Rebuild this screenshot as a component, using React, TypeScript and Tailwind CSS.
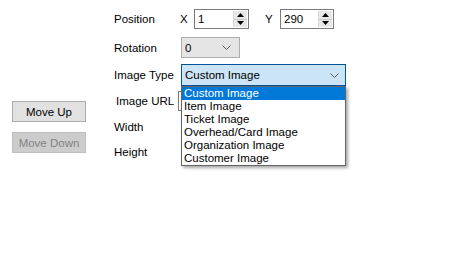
import React from "react";

const font = { fontFamily: '"Liberation Sans", Arial, sans-serif' };

function Spinner() {
  return (
    <div className="flex h-full w-[14px] flex-col border-l border-[#d9d9d9] bg-[#e8e8e8]">
      <div className="flex flex-1 items-center justify-center border-b border-[#c8c8c8]">
        <svg width="7" height="4" viewBox="0 0 7 4"><path d="M0 4 L3.5 0 L7 4 Z" fill="#000" /></svg>
      </div>
      <div className="flex flex-1 items-center justify-center">
        <svg width="7" height="4" viewBox="0 0 7 4"><path d="M0 0 L3.5 4 L7 0 Z" fill="#000" /></svg>
      </div>
    </div>
  );
}

function NumBox({ value, width }: { value: string; width: string }) {
  return (
    <div className={`flex h-[20px] ${width} items-stretch border border-[#7a7a7a] bg-white p-px`}>
      <div className="flex flex-1 items-center pl-[2px] pt-[2px] leading-none text-black">{value}</div>
      <Spinner />
    </div>
  );
}

function Chevron() {
  return (
    <svg width="9" height="5" viewBox="0 0 9 5">
      <path d="M0.5 0.5 L4.5 4.5 L8.5 0.5" fill="none" stroke="#5a5a5a" strokeWidth="1" />
    </svg>
  );
}

const items = [
  "Custom Image",
  "Item Image",
  "Ticket Image",
  "Overhead/Card Image",
  "Organization Image",
  "Customer Image",
];

export default function App() {
  return (
    <div className="relative h-[274px] w-[449px] overflow-hidden bg-white text-[11.5px] text-black" style={font}>
      <div className="flex">
        {/* Left buttons */}
        <div className="flex w-[114px] flex-col pl-[12px] pt-[101px]">
          <div className="flex h-[21px] w-[74px] items-center justify-center border border-[#adadad] bg-[#e1e1e1] pt-[2px] leading-none">
            Move Up
          </div>
          <div className="mt-[10px] flex h-[21px] w-[74px] items-center justify-center border border-[#bfbfbf] bg-[#cccccc] pt-[2px] leading-none text-[#838383]">
            Move Down
          </div>
        </div>

        {/* Form */}
        <div className="flex flex-col pt-[9px]">
          <div className="flex h-[20px] items-center">
            <div className="w-[66px] pt-[2px]">Position</div>
            <div className="w-[14px] pt-[2px]">X</div>
            <NumBox value="1" width="w-[55px]" />
            <div className="w-[16px]" />
            <div className="w-[15px] pt-[2px]">Y</div>
            <NumBox value="290" width="w-[54px]" />
          </div>

          <div className="mt-[8px] flex h-[21px] items-center">
            <div className="w-[67px] pt-[2px]">Rotation</div>
            <div className="flex h-[21px] w-[59px] items-center justify-between border border-[#adadad] bg-[#e5e5e5] pl-[3px] pr-[8px]">
              <span className="pt-[2px] leading-none">0</span>
              <Chevron />
            </div>
          </div>

          <div className="mt-[6px] flex h-[22px] items-center">
            <div className="w-[67px] pt-[2px]">Image Type</div>
            <div className="flex h-[22px] w-[165px] items-center justify-between border border-[#005499] bg-[#cce4f7] pl-[3px] pr-[6px]">
              <span className="pt-[2px] leading-none">Custom Image</span>
              <Chevron />
            </div>
          </div>

          <div className="mt-[5px] flex h-[20px] items-center">
            <div className="w-[64px] pl-[2px] pt-[2px]">Image URL</div>
            <div className="h-[20px] w-[166px] border border-[#7a7a7a] bg-white" />
          </div>

          <div className="mt-[6px] flex h-[20px] items-center">
            <div className="pt-[2px]">Width</div>
          </div>

          <div className="mt-[5px] flex h-[20px] items-center">
            <div className="pt-[2px]">Height</div>
          </div>
        </div>
      </div>

      {/* Dropdown list overlay */}
      <div className="absolute left-[181px] top-[86px] flex w-[165px] flex-col border border-[#646464] bg-white shadow-[2px_2px_3px_rgba(0,0,0,0.35)]">
        {items.map((it, i) => (
          <div
            key={it}
            className={
              i === 0
                ? "flex h-[13px] items-center bg-[#0078d7] pl-[2px] leading-none text-white"
                : "flex h-[13px] items-center pl-[2px] leading-none text-black"
            }
          >
            {it}
          </div>
        ))}
      </div>
    </div>
  );
}
